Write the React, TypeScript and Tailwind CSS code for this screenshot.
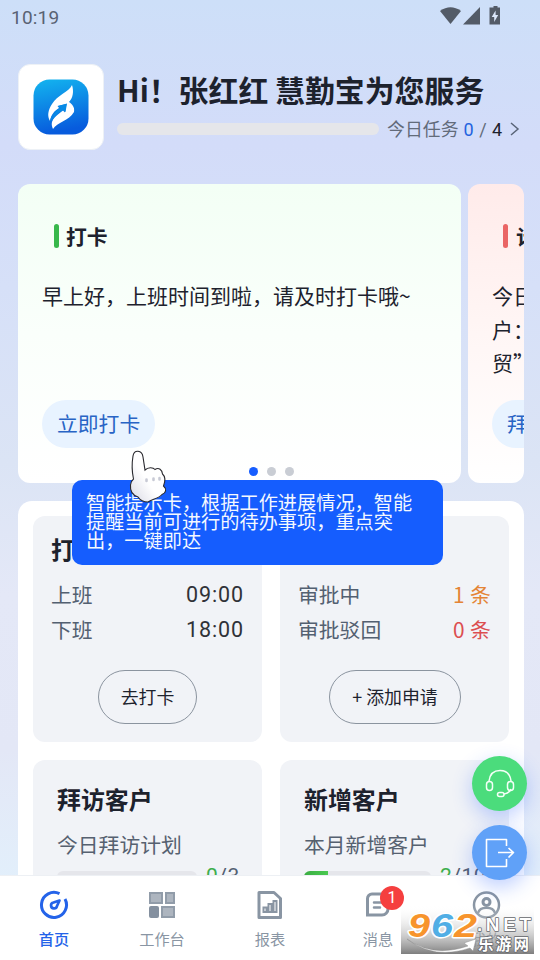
import type { ReactNode } from "react";

function StatusBar() {
  return (
    <div className="flex h-9 shrink-0 items-center justify-between pl-[11px] pr-[38px] text-[#596273]">
      <span className="font-[Roboto] text-[19px] leading-9 tracking-[0.2px]">10:19</span>
      <svg width="64" height="20" viewBox="0 0 64 20" className="-mt-1 fill-[#535b67]">
        <path d="M2 5Q12.500-2.500 23 5L12.500 18Z" />
        <path d="M25 18.500L42 1V18.500Z" />
        <path d="M55.500 0h4v1.500h2.500v17h-10.500V1.500H55.500Z" />
        <path d="M57.600 4.500L53.700 11h2.500v5l4-7h-2.600Z" fill="#dbe7fa" />
      </svg>
    </div>
  );
}

function AppLogo() {
  return (
    <div className="flex h-[86px] w-[86px] shrink-0 items-center justify-center rounded-[12px] border border-[#edf1f6] bg-white">
      <svg width="56" height="56" viewBox="0 0 56 56">
        <defs>
          <linearGradient id="logoFill" x1="0" y1="0" x2="0.200" y2="1">
            <stop offset="0" stopColor="#13b5ef" />
            <stop offset="1" stopColor="#075bdd" />
          </linearGradient>
        </defs>
        <rect x="0.500" y="0.500" width="55" height="55" rx="16" fill="url(#logoFill)" />
        <path d="M39 6C36 13 24 16 19 25C15 31 14 37 17 42C18 36 21 32 26 29L24.500 27L33.500 25L32 33.500L30 31.500C23 37 16 41 20 50C24 43 36 42 41 33C42 28 39 25 36 23C40 19 41 12 39 6Z" fill="#fff" />
        <path d="M17.500 42C19 36 23 32 28 29" stroke="#0785e6" strokeWidth="1.200" fill="none" />
        <path d="M25 27L34 24.500L32.500 33L30.500 31C26 33 22 36 19 42C20 36 23 32 28 29Z" fill="#078be6" />
      </svg>
    </div>
  );
}

function Header() {
  return (
    <header className="mt-7 flex shrink-0 gap-[13px] pl-[18px]">
      <AppLogo />
      <div className="pt-[5px]">
        <h1 className="whitespace-nowrap text-[29.900px] font-bold leading-[40px] text-[#1d222d]">Hi！张红红 慧勤宝为您服务</h1>
        <div className="mt-[8px] flex h-6 items-center">
          <div className="h-3 w-[262px] rounded-full bg-[#e5e6ea]" />
          <span className="ml-2 whitespace-nowrap pb-[2px] text-[17.900px] leading-6 text-[#626b7a]">今日任务</span>
          <span className="ml-[5px] whitespace-pre font-[Roboto] text-[18px] text-[#2463df]">0<span className="px-[1px] text-[#626b7a]">{" / "}</span><span className="text-[#1d222d]">4</span></span>
          <svg width="10" height="16" viewBox="0 0 10 16" className="ml-[8px] fill-none stroke-[#596477]" strokeWidth="1.500"><path d="M1 2l7 6-7 6" /></svg>
        </div>
      </div>
    </header>
  );
}

function Carousel() {
  return (
    <section className="ml-[18px] mt-[34px] flex h-[299px] w-[506px] shrink-0 gap-[7px]">
      <article className="flex h-full w-[443px] shrink-0 flex-col items-start rounded-[12px] bg-gradient-to-b from-[#f3fff5] via-[#fafffb] to-white px-6 pt-9">
        <h2 className="ml-[12px] flex h-8 items-center gap-[7px] text-[20.800px] font-bold text-[#1d222d]"><i className="h-6 w-[5px] rounded-full bg-[#38b84b]" /><span className="pt-px">打卡</span></h2>
        <p className="mt-[26px] whitespace-nowrap text-[21px] leading-[34px] text-[#1d222d]">早上好，上班时间到啦，请及时打卡哦~</p>
        <button className="mt-[88px] h-12 shrink-0 rounded-full bg-[#e8f3ff] px-[15px] pb-[2px] text-[20.800px] leading-[46px] text-[#2864c5]">立即打卡</button>
        <div className="flex w-full gap-[9px] pl-[207px] pt-[19px]">
          <i className="h-[9px] w-[9px] rounded-full bg-[#165dff]" />
          <i className="h-[9px] w-[9px] rounded-full bg-[#c9cdd4]" />
          <i className="h-[9px] w-[9px] rounded-full bg-[#c9cdd4]" />
        </div>
      </article>
      <article className="h-full w-14 shrink-0 overflow-hidden rounded-[12px] bg-gradient-to-b from-[#ffebea] via-[#fff6f5] to-white pl-6 pt-9">
        <h2 className="ml-[11px] flex h-8 w-20 items-center gap-2 text-[20.800px] font-bold text-[#1d222d]"><i className="h-6 w-[5px] rounded-full bg-[#ea6565]" /><span className="pt-px">计划</span></h2>
        <p className="mt-[27px] w-20 text-[21px] leading-[33.500px] text-[#1d222d]">今日客<br />户：商<br />贸”</p>
        <button className="mt-[20px] h-12 w-[114px] rounded-full bg-[#e8f3ff] pb-[2px] pl-[15px] text-left text-[20.800px] leading-[46px] text-[#2864c5]">拜访客户</button>
      </article>
    </section>
  );
}

function Row({ label, value, color }: { label: string; value: ReactNode; color: string }) {
  return (
    <div className="flex h-[35px] items-center justify-between whitespace-nowrap text-[20.800px] text-[#536071]">
      <span>{label}</span><span className={color}>{value}</span>
    </div>
  );
}

function Panel() {
  return (
    <main className="ml-[18px] mt-[18px] grid h-[374px] w-[506px] shrink-0 grid-cols-[229px_229px] grid-rows-[226px_226px] gap-[18px] overflow-hidden rounded-t-[14px] bg-white pl-[15px] pt-[15px]">
      <section className="flex flex-col rounded-[12px] bg-[#f1f3f7] px-[18px] pt-[16px]">
        <h2 className="mb-[11.500px] h-[34px] text-[24px] font-bold leading-[34px] text-[#1d222d]">打卡</h2>
        <Row label="上班" value="09:00" color="font-[Roboto] text-[21.500px] tracking-[0.9px] text-[#303237]" />
        <Row label="下班" value="18:00" color="font-[Roboto] text-[21.500px] tracking-[0.9px] text-[#303237]" />
        <button className="ml-[47px] mt-[22.500px] h-[54px] w-[99px] rounded-full border border-[#8b949f] pb-[2px] text-[17.900px] text-[#1d222d]">去打卡</button>
      </section>
      <section className="flex flex-col rounded-[12px] bg-[#f1f3f7] px-[18px] pt-[61.500px]">
        <Row label="审批中" value="1 条" color="tracking-[0.3px] text-[#e48435]" />
        <Row label="审批驳回" value="0 条" color="tracking-[0.3px] text-[#dc4e50]" />
        <button className="ml-[31px] mt-[22.500px] h-[54px] w-[132px] rounded-full border border-[#8b949f] pb-[2px] text-[17.900px] text-[#1d222d]">+ 添加申请</button>
      </section>
      <TaskCard title="拜访客户" label="今日拜访计划" done="0" total="/3" progress="w-0" barWidth="w-[140px]" />
      <TaskCard title="新增客户" label="本月新增客户" done="2" total="/10" progress="w-6" barWidth="w-[127px]" />
    </main>
  );
}

function TaskCard({ title, label, done, total, progress, barWidth }: { title: string; label: string; done: string; total: string; progress: string; barWidth: string }) {
  return (
    <section className="rounded-[12px] bg-[#f1f3f7] pl-6 pt-[21px]">
      <h2 className="text-[23.900px] font-bold leading-9 text-[#1d222d]">{title}</h2>
      <p className="mb-px mt-[9px] text-[20.800px] leading-9 text-[#566170]">{label}</p>
      <div className="flex h-7 items-center gap-[9px]">
        <div className={`h-3 overflow-hidden rounded-full bg-[#e5e6eb] ${barWidth}`}><div className={`h-full bg-gradient-to-r from-[#3bad43] to-[#49c950] ${progress}`} /></div>
        <span className="font-[Roboto] text-[21px] tracking-[0.5px] text-[#536071]"><span className="text-[#3eae4c]">{done}</span>{total}</span>
      </div>
    </section>
  );
}

const tabs: { label: string; icon: ReactNode }[] = [
  { label: "首页", icon: <><path d="M20.500 3.700A12.500 12.500 0 1 0 26 9" strokeWidth="3" /><path d="M20.500 10.500L14.500 12.500a3 3 0 1 0 3.500 3.500Z" strokeWidth="2.700" strokeLinejoin="round" /></> },
  { label: "工作台", icon: <g stroke="none"><path fill="#919ca9" d="M2 2h14v12H2ZM18 2h10v12H18ZM14 16h14v12H14Z" /><path fill="#adb5bf" d="M4 4h10v8H4ZM20 4h6v8h-6ZM16 18h10v8H16Z" /><rect x="2" y="16" width="10" height="12" rx="2" fill="#84909f" /></g> },
  { label: "报表", icon: <><path d="M4 2.500h15l6.500 6V27.500H4Z" strokeWidth="3" strokeLinejoin="round" /><path d="M8.500 22v-4.500h3V22ZM13.500 22v-8h3v8ZM18.500 22V11h3V22Z" strokeWidth="2" /></> },
  { label: "消息", icon: <><path d="M9 4h11a5 5 0 0 1 5 5v10a6 6 0 0 1-6 6H4.500V8.500A4.500 4.500 0 0 1 9 4Z" strokeWidth="3" /><path d="M11 12.500h8M11 17.500h6" strokeWidth="2.500" strokeLinecap="round" /></> },
  { label: "我的", icon: <><circle cx="15.500" cy="15" r="12.500" strokeWidth="2.500" /><circle cx="15.500" cy="12" r="3.500" strokeWidth="3" /><path d="M7 23c2-7 15-7 17 0" strokeWidth="2.500" /></> },
];

function BottomNav() {
  return (
    <nav className="relative z-10 grid h-[85px] shrink-0 grid-cols-5 border-t border-[#edf0f4] bg-white">
      {tabs.map(({ label, icon }, i) => (
        <div key={label} className={`relative flex flex-col items-center pt-[14px] ${i === 0 ? "text-[#2463e9]" : "text-[#8995a3]"}`}>
          <svg width="30" height="30" viewBox="0 0 30 30" fill="none" stroke="currentColor">{icon}</svg>
          <span className={`mt-[6px] text-[15.200px] leading-[24px] ${i === 0 ? "font-medium" : ""}`}>{label}</span>
          {i === 3 && <span className="absolute left-[56px] top-[9.500px] flex h-6 w-6 items-center justify-center rounded-full bg-[#f53f3f] font-[Roboto] text-[16px] text-white">1</span>}
        </div>
      ))}
    </nav>
  );
}

function FloatingActions() {
  return (
    <div className="absolute left-[472px] top-[756px] z-20 flex flex-col gap-[14px]">
      <button className="flex h-[55px] w-[55px] items-center justify-center rounded-full bg-[#4bdc7c] shadow-[0_7px_20px_rgba(40,95,255,0.3)]">
        <svg width="30" height="30" viewBox="0 0 30 30" fill="none" stroke="#f4fff7" strokeWidth="1.500">
          <path d="M4 13v-1C5 4 9 1.500 15 1.500S25 4 26 12v1M26 20c-1 3-3 4-7 5" /><rect x="1.500" y="12.500" width="6" height="9" rx="3" /><rect x="22.500" y="12.500" width="6" height="9" rx="3" /><rect x="12.500" y="23.500" width="6.500" height="4" rx="2" />
        </svg>
      </button>
      <button className="flex h-[55px] w-[55px] items-center justify-center rounded-full bg-[#60a1f8] shadow-[0_7px_20px_rgba(40,95,255,0.3)]">
        <svg width="30" height="30" viewBox="0 0 30 30" fill="none" stroke="white" strokeWidth="1.600" strokeLinejoin="round"><path d="M21.500 8V1.500H1.500v27H21.500V21M13 14.500h15M23.500 10l5 4.500-5 5" /></svg>
      </button>
    </div>
  );
}

function Tooltip() {
  return (
    <div className="absolute left-[72px] top-[480px] z-20 h-[85px] w-[371px] rounded-[10px] bg-[#155dfe] pl-[14px] pt-[13px] text-[19.200px] leading-[19px] text-[#f4f8ff]">
      智能提示卡，根据工作进展情况，智能<br />提醒当前可进行的待办事项，重点突<br />出，一键即达
    </div>
  );
}

function Pointer() {
  return (
    <svg className="absolute left-[128px] top-[448px] z-30" width="42" height="58" viewBox="0 0 42 58">
      <defs><linearGradient id="handFill" x1="1" y1="0" x2="0" y2="1"><stop offset="0.550" stopColor="#fff" /><stop offset="1" stopColor="#d9d9e4" /></linearGradient></defs>
      <path d="M5.500 31C4 24 4 14 5 8C6 1.500 14 1.500 15 9L17 22C20 19 25 19 27 21.500C31 19 34 22 34.500 26C38 29 37 34 35.500 38C39 41 38 45 34 46.500C30 51 24 51 20 54C15 54 12 52 10 49C4 47 2 42 2.500 37Q3 33 5.500 31Z" fill="url(#handFill)" stroke="#29292e" strokeWidth="1.100" />
      <path d="M18.500 31.500v1.500M25.500 30.500v1.500M31.500 30v1.500" stroke="#c8cad5" strokeWidth="2.600" strokeLinecap="round" />
    </svg>
  );
}

function Watermark() {
  return (
    <svg className="absolute left-[401px] top-[905px] z-30" width="133" height="49" viewBox="0 0 133 49">
      <defs>
        <linearGradient id="shade" x1="0" y1="0" x2="0" y2="1"><stop offset="0" stopColor="#fff" stopOpacity="0" /><stop offset="1" stopColor="#777" stopOpacity=".95" /></linearGradient>
      </defs>
      <rect width="133" height="49" fill="url(#shade)" />
      <path d="M6 34Q32 53 67 41L63 38L75 34L72 46L69 43Q33 55 6 34Z" fill="#fff" stroke="#888" strokeWidth=".4" />
      <g fontFamily="Liberation Sans, sans-serif" fontWeight="700" fontStyle="italic" fontSize="34" paintOrder="stroke" stroke="#fff" strokeWidth="3" strokeLinejoin="round">
        <text x="7" y="32" textLength="22" lengthAdjust="spacingAndGlyphs" fill="#f7942c">9</text>
        <text x="30" y="32" textLength="22" lengthAdjust="spacingAndGlyphs" fill="#51aee5">6</text>
        <text x="53" y="32" textLength="23" lengthAdjust="spacingAndGlyphs" fill="#f7942c">2</text>
      </g>
      <g fill="#fff" stroke="#64666b" strokeWidth="1.500" strokeLinejoin="round" style={{ paintOrder: "stroke" }} fontWeight="700">
        <text x="76" y="25.500" fontFamily="Liberation Sans, sans-serif" fontSize="19" textLength="54" lengthAdjust="spacing">.NET</text>
        <text x="77" y="45" fontFamily="Noto Sans CJK SC, sans-serif" fontSize="15.500" textLength="51">乐游网</text>
      </g>
    </svg>
  );
}

export default function App() {
  return (
    <div className="relative flex h-[960px] w-[540px] flex-col overflow-hidden bg-[linear-gradient(180deg,#cddff8_0%,#d3dcf9_15%,#d6e0f8_30%,#dbe4f5_48%,#e4e8f7_62%,#e3e7f6_78%,#e2effb_92%)] font-['Noto_Sans_CJK_SC',sans-serif]">
      <StatusBar />
      <Header />
      <Carousel />
      <Panel />
      <BottomNav />
      <FloatingActions />
      <Tooltip />
      <Pointer />
      <Watermark />
    </div>
  );
}
